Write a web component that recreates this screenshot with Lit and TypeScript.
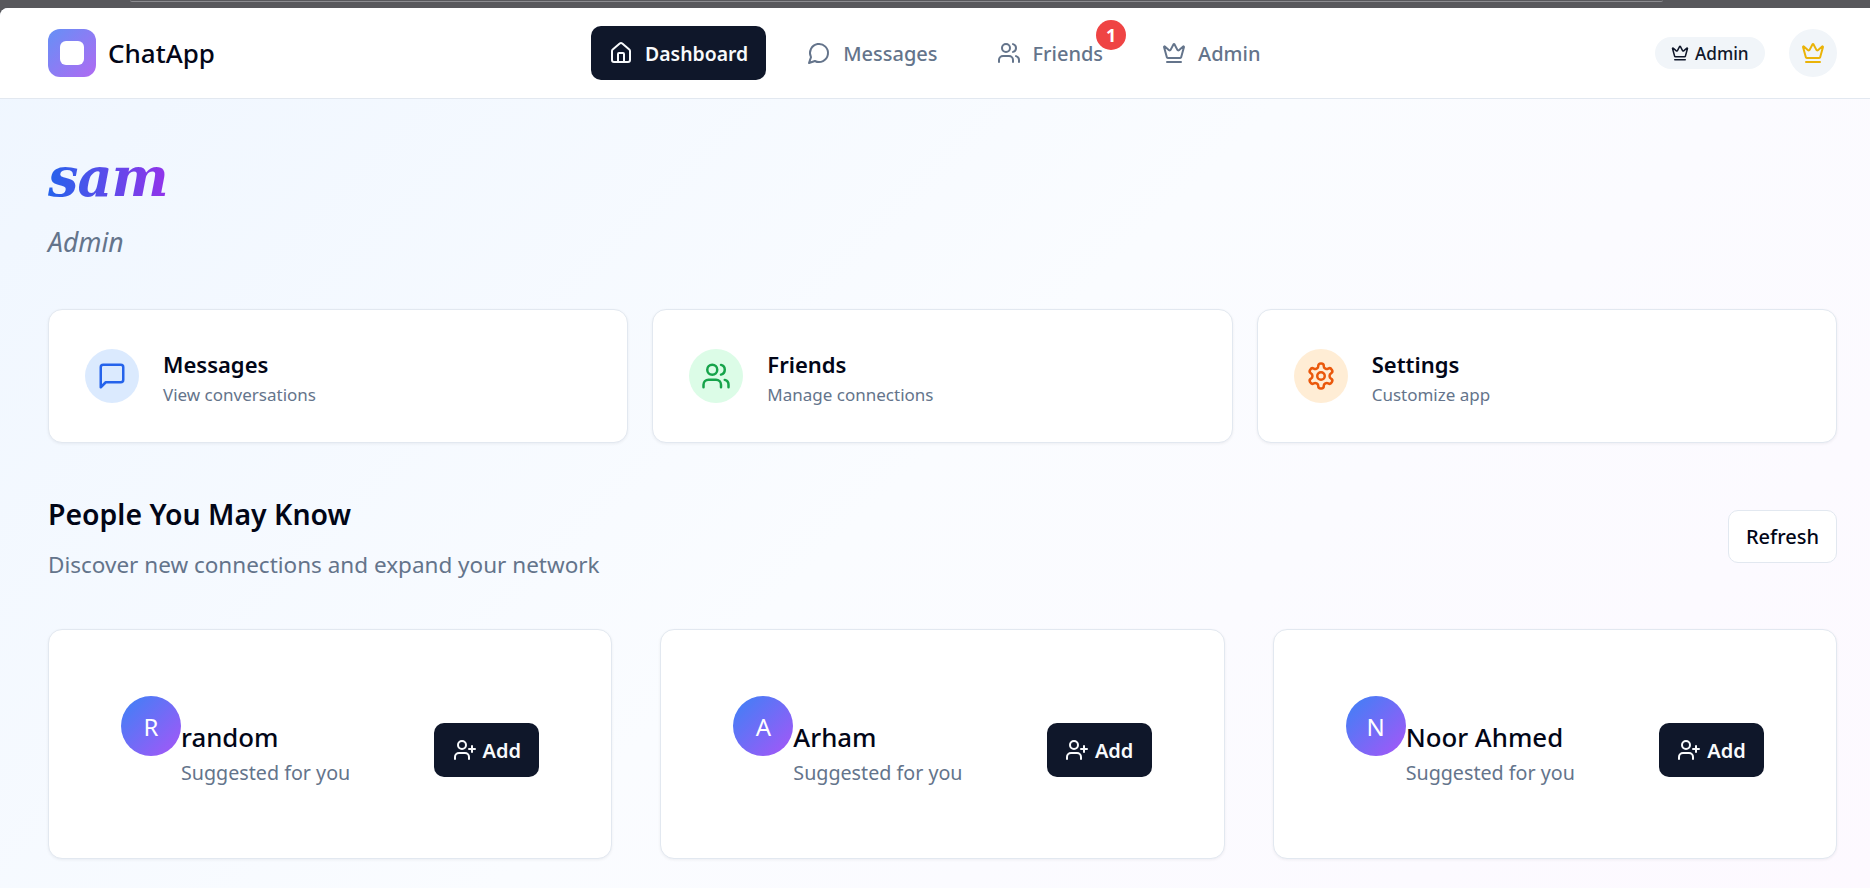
import { LitElement, css, html, svg } from 'lit';
import { customElement } from 'lit/decorators.js';

const icons = {
  home: svg`<path d="M15 21v-8a1 1 0 0 0-1-1h-4a1 1 0 0 0-1 1v8"/><path d="M3 10a2 2 0 0 1 .709-1.528l7-5.999a2 2 0 0 1 2.582 0l7 5.999A2 2 0 0 1 21 10v9a2 2 0 0 1-2 2H5a2 2 0 0 1-2-2z"/>`,
  bubble: svg`<path d="M7.9 20A9 9 0 1 0 4 16.1L2 22Z"/>`,
  users: svg`<path d="M16 21v-2a4 4 0 0 0-4-4H6a4 4 0 0 0-4 4v2"/><circle cx="9" cy="7" r="4"/><path d="M22 21v-2a4 4 0 0 0-3-3.87"/><path d="M16 3.13a4 4 0 0 1 0 7.75"/>`,
  crown: svg`<path d="M11.562 3.266a.5.5 0 0 1 .876 0L15.39 8.87a1 1 0 0 0 1.516.294L21.183 5.5a.5.5 0 0 1 .798.519l-2.834 10.246a1 1 0 0 1-.956.734H5.81a1 1 0 0 1-.957-.734L2.02 6.02a.5.5 0 0 1 .798-.519l4.276 3.664a1 1 0 0 0 1.516-.294z"/><path d="M5 21h14"/>`,
  square: svg`<path d="M21 15a2 2 0 0 1-2 2H7l-4 4V5a2 2 0 0 1 2-2h14a2 2 0 0 1 2 2z"/>`,
  gear: svg`<path d="M12.22 2h-.44a2 2 0 0 0-2 2v.18a2 2 0 0 1-1 1.73l-.43.25a2 2 0 0 1-2 0l-.15-.08a2 2 0 0 0-2.73.73l-.22.38a2 2 0 0 0 .73 2.73l.15.1a2 2 0 0 1 1 1.72v.51a2 2 0 0 1-1 1.74l-.15.09a2 2 0 0 0-.73 2.73l.22.38a2 2 0 0 0 2.73.73l.15-.08a2 2 0 0 1 2 0l.43.25a2 2 0 0 1 1 1.73V20a2 2 0 0 0 2 2h.44a2 2 0 0 0 2-2v-.18a2 2 0 0 1 1-1.73l.43-.25a2 2 0 0 1 2 0l.15.08a2 2 0 0 0 2.73-.73l.22-.39a2 2 0 0 0-.73-2.73l-.15-.08a2 2 0 0 1-1-1.74v-.5a2 2 0 0 1 1-1.74l.15-.09a2 2 0 0 0 .73-2.73l-.22-.38a2 2 0 0 0-2.73-.73l-.15.08a2 2 0 0 1-2 0l-.43-.25a2 2 0 0 1-1-1.73V4a2 2 0 0 0-2-2z"/><circle cx="12" cy="12" r="3"/>`,
  userPlus: svg`<path d="M16 21v-2a4 4 0 0 0-4-4H6a4 4 0 0 0-4 4v2"/><circle cx="9" cy="7" r="4"/><line x1="19" x2="19" y1="8" y2="14"/><line x1="22" x2="16" y1="11" y2="11"/>`,
};

const icon = (name: keyof typeof icons, size: number) => html`
  <svg width=${size} height=${size} viewBox="0 0 24 24" fill="none" stroke="currentColor" stroke-width="2" stroke-linecap="round" stroke-linejoin="round">${icons[name]}</svg>
`;

const navItems = [
  { label: 'Dashboard', icon: 'home', active: true },
  { label: 'Messages', icon: 'bubble' },
  { label: 'Friends', icon: 'users', badge: 1 },
  { label: 'Admin', icon: 'crown' },
] as const;

const features = [
  { title: 'Messages', sub: 'View conversations', icon: 'square', tone: 'blue' },
  { title: 'Friends', sub: 'Manage connections', icon: 'users', tone: 'green' },
  { title: 'Settings', sub: 'Customize app', icon: 'gear', tone: 'orange' },
] as const;

const people = ['random', 'Arham', 'Noor Ahmed'];

@customElement('app-root')
export class AppRoot extends LitElement {
  static styles = css`
    :host {
      display: block;
      height: 888px;
      overflow: hidden;
      font-family: 'Noto Sans', sans-serif;
      color: #020617;
      background: #58585c;
    }

    svg {
      display: block;
      flex: none;
    }

    .chrome {
      height: 8px;
    }

    /* edge of the browser's address bar, just visible above the window */
    .chrome span {
      display: block;
      height: 1px;
      margin: 0 207px 0 130px;
      border-bottom: 1px solid #8c8c90;
      border-radius: 0 0 4px 4px;
    }

    .window {
      height: 880px;
      border-top-left-radius: 8px;
      overflow: hidden;
      background: linear-gradient(135deg, #eff6ff 0%, #fafcff 50%, #fdf9ff 100%);
    }

    header {
      display: flex;
      align-items: center;
      justify-content: space-between;
      height: 91px;
      box-sizing: border-box;
      padding: 0 33px 0 48px;
      background: #fff;
      border-bottom: 1px solid #e2e8f0;
    }

    .brand {
      display: flex;
      align-items: center;
      gap: 12px;
    }

    .logo {
      display: flex;
      align-items: center;
      justify-content: center;
      width: 48px;
      height: 48px;
      border-radius: 12px;
      background: linear-gradient(135deg, #6590f6, #b06af2);
    }

    .logo span {
      width: 24px;
      height: 24px;
      border-radius: 6px;
      background: #fff;
    }

    .brand-name {
      font-size: 26px;
      font-weight: 500;
    }

    nav {
      display: flex;
      gap: 23px;
    }

    .nav-item {
      position: relative;
      display: flex;
      align-items: center;
      gap: 12px;
      height: 54px;
      padding: 0 18px;
      border-radius: 10px;
      font-size: 20px;
      font-weight: 500;
      color: #64748b;
    }

    .nav-item .label {
      padding-top: 1px;
    }

    .nav-item.active {
      background: #0f172a;
      color: #f8fafc;
      font-size: 19.4px;
      font-weight: 600;
    }

    .badge {
      position: absolute;
      top: -6px;
      right: -5px;
      display: flex;
      align-items: center;
      justify-content: center;
      width: 30px;
      height: 30px;
      border-radius: 50%;
      background: #ef4444;
      color: #fff;
      font-size: 18px;
      font-weight: 700;
    }

    .account {
      display: flex;
      align-items: center;
      gap: 24px;
    }

    .pill {
      display: flex;
      align-items: center;
      gap: 6px;
      height: 32px;
      padding: 0 16.4px;
      border-radius: 16px;
      background: #f1f5f9;
      color: #0f172a;
      font-size: 17.2px;
      font-weight: 500;
    }

    .pill span {
      padding-top: 1px;
    }

    .me {
      display: flex;
      align-items: center;
      justify-content: center;
      width: 48px;
      height: 48px;
      border-radius: 50%;
      background: #f1f5f9;
      color: #eab308;
    }

    main {
      padding: 42px 33px 0 48px;
    }

    h1 {
      display: block;
      width: max-content;
      margin: 0;
      font-family: 'DejaVu Serif', serif;
      font-size: 54px;
      font-style: italic;
      font-weight: 700;
      line-height: 72px;
      letter-spacing: -1px;
      background: linear-gradient(90deg, #2563eb, #9333ea);
      -webkit-background-clip: text;
      background-clip: text;
      color: transparent;
    }

    .role {
      margin: 13px 0 0;
      font-size: 26.5px;
      font-style: italic;
      font-weight: 400;
      line-height: 32px;
      color: #64748b;
    }

    .features {
      display: grid;
      grid-template-columns: repeat(3, 1fr);
      gap: 24px;
      margin-top: 51px;
    }

    .card {
      background: #fff;
      border: 1px solid #e2e8f0;
      border-radius: 14px;
      box-shadow: 0 1px 3px rgba(15, 23, 42, 0.06);
      box-sizing: border-box;
    }

    .feature {
      display: flex;
      align-items: center;
      gap: 24px;
      height: 134px;
      padding: 0 36px;
    }

    .feature-text {
      padding-top: 3px;
    }

    .feature-icon {
      display: flex;
      align-items: center;
      justify-content: center;
      width: 54px;
      height: 54px;
      border-radius: 50%;
    }

    .blue {
      background: #dbeafe;
      color: #2563eb;
    }

    .green {
      background: #dcfce7;
      color: #16a34a;
    }

    .orange {
      background: #ffedd5;
      color: #ea580c;
    }

    .feature-title {
      font-size: 22px;
      font-weight: 600;
      line-height: 32px;
    }

    .feature-sub {
      margin-top: 3px;
      font-size: 17px;
      line-height: 24px;
      color: #64748b;
    }

    .section-head {
      display: flex;
      align-items: center;
      justify-content: space-between;
      margin-top: 52px;
    }

    h2 {
      margin: 0;
      font-size: 28.4px;
      font-weight: 600;
      line-height: 38px;
    }

    .section-sub {
      margin: 17px 0 0;
      font-size: 22.5px;
      line-height: 30px;
      color: #64748b;
    }

    .refresh {
      width: 109px;
      height: 53px;
      margin-bottom: 2px;
      box-sizing: border-box;
      border: 1px solid #e2e8f0;
      border-radius: 10px;
      background: #fff;
      color: #020617;
      font: 500 20px 'Noto Sans', sans-serif;
    }

    .people {
      display: grid;
      grid-template-columns: repeat(3, 1fr);
      gap: 48px;
      margin-top: 49px;
    }

    .person {
      display: flex;
      align-items: center;
      justify-content: space-between;
      height: 230px;
      padding: 12px 72px 0;
    }

    .who {
      display: flex;
      height: 108px;
    }

    .avatar {
      display: flex;
      align-items: center;
      justify-content: center;
      width: 60px;
      height: 60px;
      border-radius: 50%;
      background: linear-gradient(135deg, #3b82f6, #a855f7);
      color: #fff;
      font-size: 24px;
    }

    .info {
      padding-top: 24px;
    }

    .name {
      font-size: 25.8px;
      font-weight: 500;
      line-height: 34px;
    }

    .hint {
      margin-top: 1px;
      font-size: 19.7px;
      line-height: 36px;
      color: #64748b;
    }

    .add {
      display: flex;
      align-items: center;
      justify-content: center;
      gap: 6px;
      width: 105px;
      height: 54px;
      padding: 0;
      border: none;
      border-radius: 10px;
      background: #0f172a;
      color: #f8fafc;
      font: 600 20px 'Noto Sans', sans-serif;
    }
  `;

  render() {
    return html`
      <div class="chrome"><span></span></div>
      <div class="window">
        <header>
          <div class="brand">
            <div class="logo"><span></span></div>
            <div class="brand-name">ChatApp</div>
          </div>
          <nav>
            ${navItems.map(
              (item) => html`
                <div class="nav-item ${'active' in item ? 'active' : ''}">
                  ${icon(item.icon, 24)}
                  <span class="label">${item.label}</span>
                  ${'badge' in item ? html`<span class="badge">${item.badge}</span>` : ''}
                </div>
              `
            )}
          </nav>
          <div class="account">
            <div class="pill">${icon('crown', 18)}<span>Admin</span></div>
            <div class="me">${icon('crown', 24)}</div>
          </div>
        </header>
        <main>
          <h1>sam</h1>
          <p class="role">Admin</p>
          <section class="features">
            ${features.map(
              (f) => html`
                <div class="card feature">
                  <div class="feature-icon ${f.tone}">${icon(f.icon, 30)}</div>
                  <div class="feature-text">
                    <div class="feature-title">${f.title}</div>
                    <div class="feature-sub">${f.sub}</div>
                  </div>
                </div>
              `
            )}
          </section>
          <section class="section-head">
            <div>
              <h2>People You May Know</h2>
              <p class="section-sub">Discover new connections and expand your network</p>
            </div>
            <button class="refresh">Refresh</button>
          </section>
          <section class="people">
            ${people.map(
              (name) => html`
                <div class="card person">
                  <div class="who">
                    <div class="avatar">${name[0].toUpperCase()}</div>
                    <div class="info">
                      <div class="name">${name}</div>
                      <div class="hint">Suggested for you</div>
                    </div>
                  </div>
                  <button class="add">${icon('userPlus', 24)}Add</button>
                </div>
              `
            )}
          </section>
        </main>
      </div>
    `;
  }
}
